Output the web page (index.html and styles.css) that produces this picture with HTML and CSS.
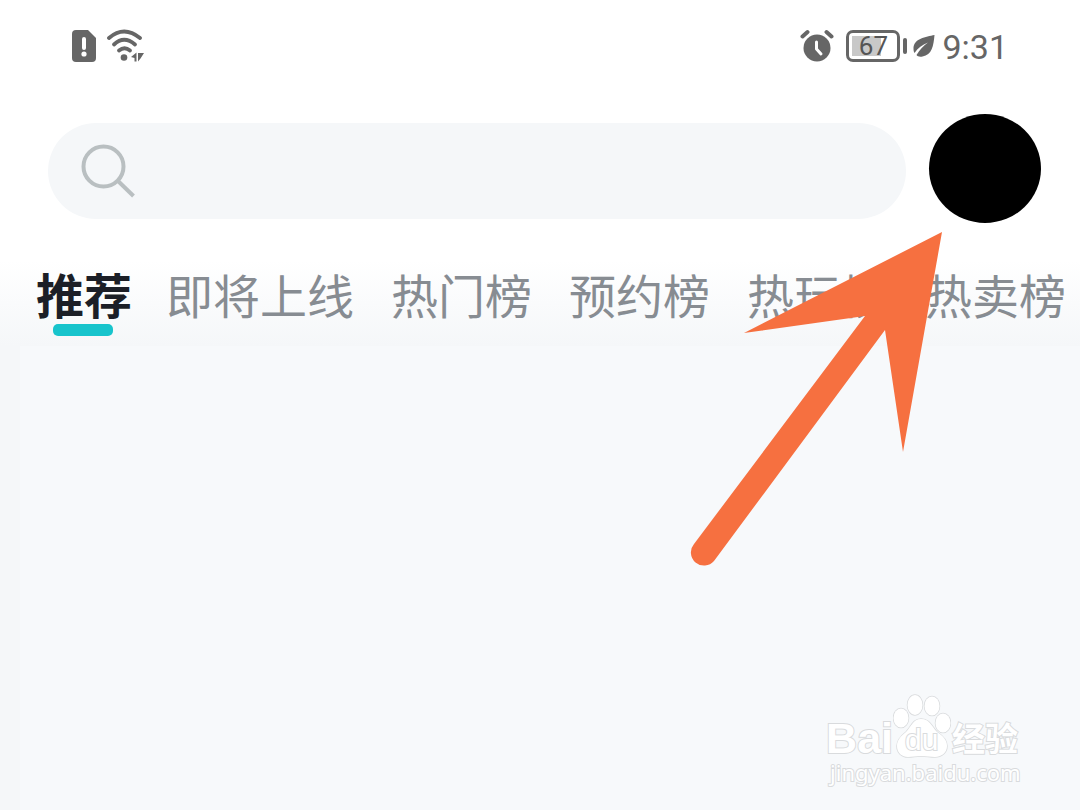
FILE: index.html
```
<!DOCTYPE html>
<html lang="zh-CN">
<head>
    <meta charset="UTF-8">
    <meta name="viewport" content="width=device-width, initial-scale=1">
    <title>推荐</title>
    <link rel="stylesheet" href="styles.css">
</head>
<body>
    <div class="status">
        <svg class="sim" width="26" height="34" viewBox="0 0 26 34">
            <path d="M5 1h12l8 8v20a4 4 0 0 1-4 4H5a4 4 0 0 1-4-4V5a4 4 0 0 1 4-4z" fill="#666"/>
            <path d="M13 10v9" stroke="#fff" stroke-width="4" stroke-linecap="round"/>
            <circle cx="13" cy="25" r="2.6" fill="#fff"/>
        </svg>
        <svg class="wifi" width="40" height="34" viewBox="0 0 40 34">
            <g fill="none" stroke="#666" stroke-width="3.8" stroke-linecap="round">
                <path d="M3 9Q18-4 34 9"/>
                <path d="M8 15.500Q18 6 29 15.500"/>
                <path d="M13 21.500Q18.500 17 24 21.500"/>
            </g>
            <circle cx="18" cy="28.500" r="3.300" fill="#666"/>
            <path d="M30.500 23.500v9h-2v-3.500l-3.500-1zM32 24h6l-3.500 5.500L32 32.500z" fill="#666"/>
        </svg>
        <div class="status-right">
            <svg class="alarm" width="34" height="34" viewBox="0 0 34 34">
                <circle cx="17" cy="19" r="13.500" fill="#666"/>
                <path d="M2.500 7.500l5-4.500M31.500 7.500l-5-4.500" stroke="#666" stroke-width="4" stroke-linecap="round"/>
                <path d="M16.500 13v7l4.500 5" fill="none" stroke="#fff" stroke-width="3" stroke-linecap="round" stroke-linejoin="round"/>
            </svg>
            <span class="battery">67</span>
            <svg class="leaf" width="22" height="24" viewBox="0 0 22 24">
                <path d="M21.500 1C13 3 .5 4 .5 15c0 2 .5 3 1 4C5 14 9 11 15 8.500 10 12 6.500 16 3.500 21c1 1.500 3 2 6 1.500C19 21 20.500 12 21.500 1z" fill="#666"/>
            </svg>
            <span class="time">9:31</span>
        </div>
    </div>

    <header class="header">
        <label class="search">
            <svg width="56" height="56" viewBox="0 0 56 56" fill="none" stroke="#b9bfc1" stroke-width="4">
                <circle cx="23.500" cy="23.500" r="20"/>
                <path d="M37.500 37.500L53.500 53"/>
            </svg>
            <input type="search" aria-label="搜索">
        </label>
        <button class="avatar" aria-label="我的"></button>
    </header>

    <nav class="tabs">
        <a href="#" class="tab active">推荐</a>
        <a href="#" class="tab">即将上线</a>
        <a href="#" class="tab">热门榜</a>
        <a href="#" class="tab">预约榜</a>
        <a href="#" class="tab">热玩榜</a>
        <a href="#" class="tab">热卖榜</a>
    </nav>

    <main class="content"></main>

    <!-- 指向头像的箭头 -->
    <svg class="arrow" width="254" height="336" viewBox="0 0 254 336">
        <path d="M252 0L54 101 175 84 4 312a12.500 12.500 0 0 0 20 17L195 98l18 122z" fill="#f67040"/>
    </svg>

    <!-- 水印 -->
    <div class="watermark">
        <div class="brand">
            <span class="bai">Bai</span>
            <span class="paw">
                <svg width="58" height="64" viewBox="0 0 58 64" fill="#fff" stroke="#d9dbdd" stroke-width="1.500">
                    <ellipse cx="8" cy="24" rx="7.500" ry="9.500"/>
                    <ellipse cx="22" cy="11" rx="7.500" ry="10"/>
                    <ellipse cx="39" cy="12" rx="7.500" ry="9.500"/>
                    <ellipse cx="50" cy="29" rx="7.500" ry="9.500"/>
                    <path d="M28 25c9 0 11 8 16 13 6 4 10 8 10 14 0 7-6 11-12 11-5 0-9-1-14-1s-8 1-13 1C9 63 4 59 4 52c0-6 4-10 9-14 5-5 7-13 15-13z"/>
                </svg>
                <span class="du">du</span>
            </span>
            <span class="jingyan">经验</span>
        </div>
        <div class="site">jingyan.baidu.com</div>
    </div>
</body>
</html>
```
FILE: styles.css
```
* {
    box-sizing: border-box;
}
body,html {
    min-height: 100vh;
    margin: 0;
}
body {
    display: flex;
    flex-direction: column;
    position: relative;
    overflow: hidden;
    background: #f5f7f9;
    font-family: Roboto, "Noto Sans CJK SC", sans-serif;
}
a {
    text-decoration: none;
}
.status {
    display: flex;
    align-items: center;
    height: 114px;
    padding: 0 72px 22px 71px;
    background: #fff;
    color: #666;
}
.wifi {
    margin-left: 9px;
}
.status-right {
    display: flex;
    align-items: center;
    margin-left: auto;
}
.battery {
    position: relative;
    width: 54px;
    height: 32px;
    margin: 0 13px 0 12px;
    border: 3px solid #666;
    border-radius: 7px;
    background: linear-gradient(#c8c8c8, #c8c8c8) 3px 3px / 29px 20px no-repeat;
    color: #555;
    font-size: 26px;
    line-height: 27px;
    text-align: center;
}
.battery::after {
    content: "";
    position: absolute;
    top: 5px;
    right: -10px;
    width: 4px;
    height: 16px;
    border-radius: 2px;
    background: #666;
}
.time {
    padding-top: 2px;
    margin-left: 7px;
    font-size: 34px;
    line-height: 40px;
}
.header {
    display: flex;
    align-items: center;
    padding: 0 39px 0 48px;
    background: #fff;
}
.search {
    display: flex;
    flex: 1;
    align-items: center;
    height: 96px;
    margin-top: 4px;
    padding: 0 32px;
    border-radius: 48px;
    background: #f5f7f9;
}
.search input {
    flex: 1;
    min-width: 0;
    border: 0;
    outline: 0;
    background: none;
    font-size: 36px;
}
.avatar {
    width: 112px;
    height: 109px;
    margin-left: 23px;
    padding: 0;
    border: 0;
    border-radius: 50%;
    background: #000;
}
.tabs {
    display: flex;
    gap: 37px;
    height: 123px;
    padding: 40px 0 0 36px;
    background: linear-gradient(#fff 30%, #f5f7f9);
    white-space: nowrap;
}
.tab {
    position: relative;
    flex: none;
    color: #878c92;
    font-size: 47px;
    line-height: 70px;
}
.tab.active {
    margin-right: -3px;
    color: #1c1f27;
    font-size: 48px;
    font-weight: bold;
}
.tab.active::after {
    content: "";
    position: absolute;
    top: 61px;
    left: 17px;
    width: 60px;
    height: 12px;
    border-radius: 5px;
    background: #18c4cc;
}
.content {
    flex: 1;
    margin-left: 20px;
    background: #f7f9fb;
}
.arrow {
    position: absolute;
    top: 232px;
    right: 136px;
}
.watermark {
    position: absolute;
    right: 58px;
    bottom: 24px;
    color: #fff;
    -webkit-text-stroke: 2px #d9dbdd;
    paint-order: stroke fill;
}
.brand {
    display: flex;
    align-items: flex-end;
    margin: 0 4px 0 -4px;
}
.bai {
    font: bold 43px/40px "Liberation Sans", sans-serif;
}
.paw {
    position: relative;
    height: 64px;
}
.du {
    position: absolute;
    left: 12px;
    bottom: 2px;
    font: 30px/32px "Liberation Sans", sans-serif;
}
.jingyan {
    margin-left: 1px;
    font-size: 33px;
    font-weight: bold;
    line-height: 36px;
}
.site {
    font: 22px/28px "Noto Sans", sans-serif;
}
```
